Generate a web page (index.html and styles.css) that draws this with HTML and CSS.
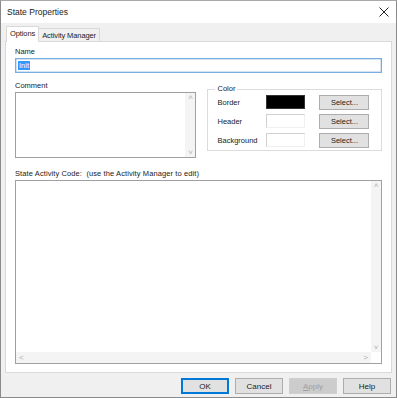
FILE: index.html
```html
<!DOCTYPE html>
<html>
<head>
<meta charset="utf-8">
<link rel="stylesheet" href="styles.css">
</head>
<body>
<div class="window">
  <div class="titlebar">
    <span class="title">State Properties</span>
    <svg class="close" width="10" height="10" viewBox="0 0 10 10"><path d="M0.5 0.5L9.5 9.5M9.5 0.5L0.5 9.5" stroke="#222" stroke-width="1"/></svg>
  </div>
  <div class="body">
    <div class="tabs">
      <div class="tab active">Options</div>
      <div class="tab">Activity Manager</div>
    </div>
    <div class="page">
      <div class="label">Name</div>
      <div class="input focused"><span class="sel">Init</span></div>
      <div class="mid">
        <div class="comment-col">
          <div class="label">Comment</div>
          <div class="textarea comment">
            <div class="vscroll">
              <span class="arr">&#x2C4;</span>
              <span class="arr">&#x2C5;</span>
            </div>
          </div>
        </div>
        <fieldset class="group">
          <legend>Color</legend>
          <div class="row"><span class="rl">Border</span><span class="swatch black"></span><span class="btn small">Select...</span></div>
          <div class="row"><span class="rl">Header</span><span class="swatch"></span><span class="btn small">Select...</span></div>
          <div class="row"><span class="rl">Background</span><span class="swatch"></span><span class="btn small">Select...</span></div>
        </fieldset>
      </div>
      <div class="label code-label">State Activity Code:&nbsp;&nbsp;(use the Activity Manager to edit)</div>
      <div class="textarea code">
        <div class="code-main">
          <div class="code-area"></div>
          <div class="vscroll">
            <span class="arr">&#x2C4;</span>
            <span class="arr">&#x2C5;</span>
          </div>
        </div>
        <div class="hscroll">
          <span class="arr">&#x2C2;</span>
          <span class="arr">&#x2C3;</span>
        </div>
      </div>
    </div>
    <div class="buttons">
      <span class="btn default">OK</span>
      <span class="btn">Cancel</span>
      <span class="btn disabled"><u>A</u>pply</span>
      <span class="btn">Help</span>
    </div>
  </div>
</div>
</body>
</html>
```

FILE: styles.css
```css
* { box-sizing: border-box; }
html, body { margin: 0; padding: 0; }
body {
  width: 397px;
  height: 398px;
  overflow: hidden;
  font-family: "Liberation Sans", Arial, sans-serif;
  font-size: 8px;
  color: #222;
  background: #f0f0f0;
}
.window {
  width: 397px;
  height: 398px;
  border: 1px solid #8a8a8a;
  border-top-color: #aaa;
  display: flex;
  flex-direction: column;
  background: #f0f0f0;
}
.titlebar {
  height: 22px;
  background: #fff;
  display: flex;
  align-items: center;
  justify-content: space-between;
  padding: 0 7px 0 6px;
  flex: none;
}
.title { font-size: 8.5px; color: #222; }
.close { margin-top: -1px; }
.body {
  flex: 1;
  display: flex;
  flex-direction: column;
  padding: 3px 4px 0 4px;
}
.tabs {
  display: flex;
  align-items: flex-end;
  height: 15px;
  padding-left: 1px;
  position: relative;
  z-index: 1;
}
.tab {
  height: 13px;
  padding: 0 3px;
  border: 1px solid #d9d9d9;
  border-bottom: none;
  background: #f0f0f0;
  display: flex;
  align-items: center;
  font-size: 7.5px;
  letter-spacing: -0.1px;
}
.tab.active {
  background: #fff;
  margin-bottom: -1px;
  height: 16px;
  padding: 0 3px 2px 3px;
}
.tab + .tab { border-left: none; }
.page {
  height: 332px;
  background: #fff;
  border: 1px solid #d9d9d9;
  padding: 5px 9px 0 9px;
  display: flex;
  flex-direction: column;
}
.label { font-size: 7.5px; line-height: 10px; height: 10px; }
.input {
  margin-top: 1px;
  height: 15px;
  border: 1px solid #7aaee0;
  display: flex;
  align-items: center;
  padding-left: 2px;
}
.input.focused { border-color: #7aaee0; box-shadow: inset 0 0 0 0.5px #a8c8e8; }
.sel { background: #3399ff; color: #fff; font-size: 7.5px; line-height: 9px; padding: 0 1px; }
.mid {
  margin-top: 8px;
  display: flex;
  gap: 11px;
  height: 77px;
}
.comment-col { width: 182px; display: flex; flex-direction: column; }
.textarea { border: 1px solid #a0a0a0; background: #fff; }
.comment {
  margin-top: 1px;
  height: 66px;
  display: flex;
  justify-content: flex-end;
}
.vscroll {
  width: 10px;
  background: #f4f4f4;
  display: flex;
  flex-direction: column;
  justify-content: space-between;
  align-items: center;
  font-size: 8px;
  line-height: 9px;
}
.arr { color: #b0b0b0; }
.group {
  margin: 4px 0 0 0;
  padding: 2px 8px 0 9px;
  width: 175px;
  height: 66px;
  border: 1px solid #dcdcdc;
  display: flex;
  flex-direction: column;
  gap: 5px;
}
.group legend { font-size: 7.5px; padding: 0 2px; margin-left: -2px; line-height: 8px; }
.row { display: flex; align-items: center; height: 14px; }
.rl { width: 49px; font-size: 7.5px; }
.swatch {
  width: 39px;
  height: 14px;
  border: 1px solid #d0d0d0;
  border-right-color: #f0f0f0;
  border-bottom-color: #f0f0f0;
  background: #fff;
  margin-right: 14px;
}
.swatch.black { background: #000; border-color: #333; }
.btn {
  display: flex;
  align-items: center;
  justify-content: center;
  background: #e1e1e1;
  border: 1px solid #adadad;
  font-size: 8px;
}
.btn.small { width: 50px; height: 15px; font-size: 7.5px; }
.code-label { margin-top: 11px; letter-spacing: 0.1px; }
.code {
  margin-top: 1px;
  height: 184px;
  display: flex;
  flex-direction: column;
}
.code-main { flex: 1; display: flex; }
.code-area { flex: 1; }
.hscroll {
  height: 11px;
  background: #f4f4f4;
  margin-right: 10px;
  display: flex;
  justify-content: space-between;
  align-items: center;
  padding: 0 3px;
  font-size: 8px;
}
.buttons {
  display: flex;
  justify-content: flex-end;
  gap: 6px;
  padding-top: 5px;
  padding-right: 1px;
}
.buttons .btn { width: 48px; height: 16px; }
.btn.default { border: 1px solid #0078d7; box-shadow: inset 0 0 0 1px #0078d7; }
.btn.disabled { color: #a0a0a0; border-color: #cfcfcf; background: #ccc; }
.btn u { text-decoration: underline; }
```
